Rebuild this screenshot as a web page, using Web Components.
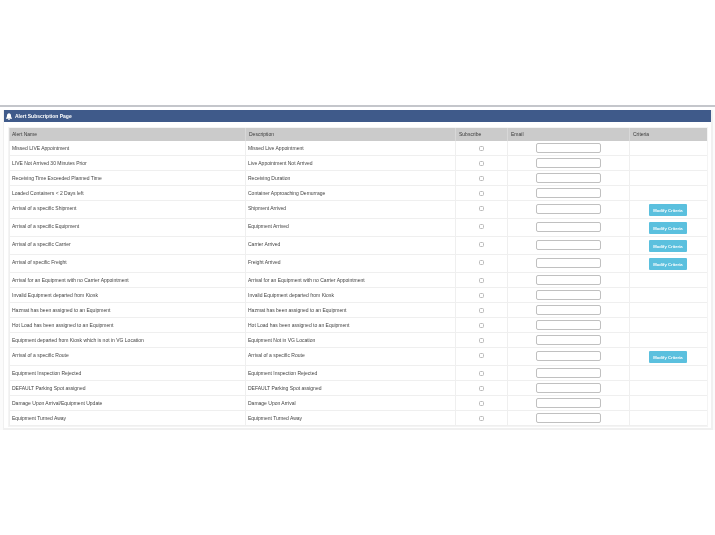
<!DOCTYPE html>
<html>
<head>
<meta charset="utf-8">
<title>Alert Subscription Page</title>
<style>
    html, body { margin: 0; background: #fff; }
    body { font-family: "Liberation Sans", Arial, sans-serif; }
</style>
</head>
<body>
<alert-page></alert-page>
<script>
const COLUMNS = '236px 210px 52px 122px 77px';

const ALERTS = [
    ['Missed LIVE Appointment', 'Missed Live Appointment'],
    ['LIVE Not Arrived 30 Minutes Prior', 'Live Appointment Not Arrived'],
    ['Receiving Time Exceeded Planned Time', 'Receiving Duration'],
    ['Loaded Containers < 2 Days left', 'Container Approaching Demurrage'],
    ['Arrival of a specific Shipment', 'Shipment Arrived', true],
    ['Arrival of a specific Equipment', 'Equipment Arrived', true],
    ['Arrival of a specific Carrier', 'Carrier Arrived', true],
    ['Arrival of specific Freight', 'Freight Arrived', true],
    ['Arrival for an Equipment with no Carrier Appointment', 'Arrival for an Equipment with no Carrier Appointment'],
    ['Invalid Equipment departed from Kiosk', 'Invalid Equipment departed from Kiosk'],
    ['Hazmat has been assigned to an Equipment', 'Hazmat has been assigned to an Equipment'],
    ['Hot Load has been assigned to an Equipment', 'Hot Load has been assigned to an Equipment'],
    ['Equipment departed from Kiosk which is not in VG Location', 'Equipment Not in VG Location'],
    ['Arrival of a specific Route', 'Arrival of a specific Route', true],
    ['Equipment Inspection Rejected', 'Equipment Inspection Rejected'],
    ['DEFAULT Parking Spot assigned', 'DEFAULT Parking Spot assigned'],
    ['Damage Upon Arrival/Equipment Update', 'Damage Upon Arrival'],
    ['Equipment Turned Away', 'Equipment Turned Away']
];

class PanelHeading extends HTMLElement {
    constructor() {
        super();
        this.attachShadow({ mode: 'open' });
        this.shadowRoot.innerHTML = `
            <style>
                :host {
                    display: flex;
                    align-items: center;
                    gap: 3px;
                    height: 12px;
                    padding-left: 2px;
                    background: #3f5a8a;
                    color: #fff;
                    font-size: 5px;
                    font-weight: bold;
                }
                svg { width: 6px; height: 7px; fill: #fff; }
            </style>
            <svg viewBox="0 0 12 14"><path d="M6 0a1 1 0 0 1 1 1.1C9 1.6 10 3.300 10 5.200c0 3.300 1 4.300 2 5.300v.8H0v-.8c1-1 2-2 2-5.300C2 3.300 3 1.600 5 1.100A1 1 0 0 1 6 0zM4.300 12.200h3.400A1.700 1.700 0 0 1 6 14a1.700 1.700 0 0 1-1.700-1.800z"/></svg>
            <slot></slot>
        `;
    }
}

class AlertHeader extends HTMLElement {
    constructor() {
        super();
        this.attachShadow({ mode: 'open' });
        this.shadowRoot.innerHTML = `
            <style>
                :host {
                    display: grid;
                    grid-template-columns: ${COLUMNS};
                    height: 13px;
                    background: #cbcbcb;
                    color: #3a3a3a;
                    font-size: 5px;
                    line-height: 12px;
                }
                div { padding-left: 3px; border-left: 1px solid #d8d8d8; }
                div:first-child { border-left: 0; padding-left: 2px; }
                div:nth-child(2) { padding-left: 2px; }
            </style>
            <div>Alert Name</div>
            <div>Description</div>
            <div>Subscribe</div>
            <div>Email</div>
            <div>Criteria</div>
        `;
    }
}

class AlertRow extends HTMLElement {
    constructor() {
        super();
        this.attachShadow({ mode: 'open' });
        const hasCriteria = this.hasAttribute('criteria');
        this.shadowRoot.innerHTML = `
            <style>
                :host {
                    display: grid;
                    grid-template-columns: ${COLUMNS};
                    height: ${hasCriteria ? 18 : 15}px;
                    box-sizing: border-box;
                    border-bottom: 1px solid #efefef;
                    background: #fff;
                    color: #444;
                    font-size: 5px;
                }
                .cell {
                    box-sizing: border-box;
                    padding: 4px 0 0 2px;
                    border-left: 1px solid #efefef;
                    white-space: nowrap;
                    overflow: hidden;
                }
                .cell:first-child { border-left: 0; }
                .check { display: flex; justify-content: center; padding: 5px 0 0 0; }
                .check input {
                    appearance: none;
                    width: 5px;
                    height: 5px;
                    margin: 0;
                    border: 1px solid #bbb;
                    border-radius: 1.500px;
                    box-sizing: border-box;
                }
                .email { display: flex; justify-content: center; padding: ${hasCriteria ? 3 : 2}px 0 0 0; }
                .email input {
                    box-sizing: border-box;
                    width: 65px;
                    height: 10px;
                    margin: 0;
                    border: 1px solid #c0c0c0;
                    border-radius: 2px;
                    background: #fff;
                }
                .criteria { display: flex; justify-content: center; padding: 3px 0 0 0; }
                button {
                    width: 38px;
                    height: 12px;
                    padding: 0;
                    border: 0;
                    border-radius: 1px;
                    background: #5bc0de;
                    color: #fff;
                    font: bold 4.200px "Liberation Sans", Arial, sans-serif;
                }
            </style>
            <div class="cell"><slot name="name"></slot></div>
            <div class="cell"><slot name="description"></slot></div>
            <div class="cell check"><input type="checkbox"></div>
            <div class="cell email"><input type="text"></div>
            <div class="cell criteria">${hasCriteria ? '<button>Modify Criteria</button>' : ''}</div>
        `;
    }
}

class AlertPage extends HTMLElement {
    constructor() {
        super();
        this.attachShadow({ mode: 'open' });
        const rows = ALERTS.map(([name, description, criteria]) => `
            <alert-row ${criteria ? 'criteria' : ''}>
                <span slot="name">${name.replace('<', '&lt;')}</span>
                <span slot="description">${description}</span>
            </alert-row>
        `).join('');
        this.shadowRoot.innerHTML = `
            <style>
                :host { display: block; padding-top: 105px; filter: blur(0.35px); }
                .rule { height: 2px; background: #c4c6cb; margin-bottom: 3px; }
                .wrap { padding: 0 2px 0 3px; background: #fbfbfb; }
                .panel { width: 707px; border: solid #f0f0f0; border-width: 0 2px 2px 1px; background: #fff; margin-right: -1px; }
                .body { padding: 6px 4px 2px 5px; background: #fff; }
                .table { box-shadow: 0 0 0 1px #f4f4f4; }
            </style>
            <div class="rule"></div>
            <div class="wrap">
                <div class="panel">
                    <panel-heading>Alert Subscription Page</panel-heading>
                    <div class="body">
                        <div class="table">
                            <alert-header></alert-header>
                            ${rows}
                        </div>
                    </div>
                </div>
            </div>
        `;
    }
}

customElements.define('panel-heading', PanelHeading);
customElements.define('alert-header', AlertHeader);
customElements.define('alert-row', AlertRow);
customElements.define('alert-page', AlertPage);
</script>
</body>
</html>
